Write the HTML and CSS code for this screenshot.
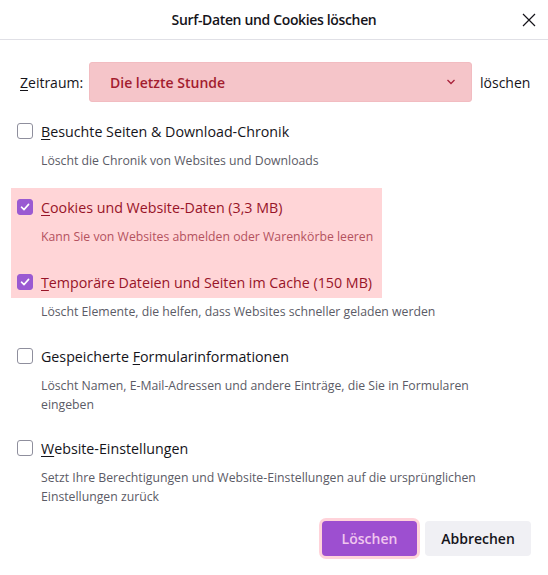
FILE: index.html
```html
<!DOCTYPE html>
<html lang="de">
<head>
<meta charset="utf-8">
<title>Surf-Daten und Cookies löschen</title>
<link rel="stylesheet" href="styles.css">
</head>
<body>
<div class="dialog">
  <header class="dialog-header">
    <h1 class="dialog-title">Surf-Daten und Cookies löschen</h1>
    <button class="close-btn" aria-label="Schließen">
      <svg width="14" height="14" viewBox="0 0 14 14"><path d="M1 1 L13 13 M13 1 L1 13" stroke="#15141a" stroke-width="1.2" fill="none"/></svg>
    </button>
  </header>

  <div class="dialog-body">
    <div class="range-row">
      <label class="range-label"><u>Z</u>eitraum:</label>
      <div class="select">
        <span class="select-value">Die letzte Stunde</span>
        <svg class="select-chevron" width="10" height="6" viewBox="0 0 10 6"><path d="M1.5 1 L5 4.5 L8.5 1" stroke="#a8213a" stroke-width="1.3" fill="none"/></svg>
      </div>
      <span class="range-suffix">löschen</span>
    </div>

    <div class="options">
      <div class="highlight"></div>

      <div class="option">
        <label class="option-row">
          <span class="checkbox"></span>
          <span class="option-label"><u>B</u>esuchte Seiten &amp; Download-Chronik</span>
        </label>
        <p class="option-desc">Löscht die Chronik von Websites und Downloads</p>
      </div>

      <div class="option option-marked">
        <label class="option-row">
          <span class="checkbox checked"><svg width="12" height="12" viewBox="0 0 12 12"><path d="M2.5 6.2 L5 8.6 L9.6 3.4" stroke="#fff" stroke-width="1.6" fill="none" stroke-linecap="round" stroke-linejoin="round"/></svg></span>
          <span class="option-label"><u>C</u>ookies und Website-Daten (3,3 MB)</span>
        </label>
        <p class="option-desc">Kann Sie von Websites abmelden oder Warenkörbe leeren</p>
      </div>

      <div class="option">
        <label class="option-row option-marked">
          <span class="checkbox checked"><svg width="12" height="12" viewBox="0 0 12 12"><path d="M2.5 6.2 L5 8.6 L9.6 3.4" stroke="#fff" stroke-width="1.6" fill="none" stroke-linecap="round" stroke-linejoin="round"/></svg></span>
          <span class="option-label"><u>T</u>emporäre Dateien und Seiten im Cache (150 MB)</span>
        </label>
        <p class="option-desc">Löscht Elemente, die helfen, dass Websites schneller geladen werden</p>
      </div>

      <div class="option">
        <label class="option-row">
          <span class="checkbox"></span>
          <span class="option-label">Gespeicherte <u>F</u>ormularinformationen</span>
        </label>
        <p class="option-desc">Löscht Namen, E-Mail-Adressen und andere Einträge, die Sie in Formularen eingeben</p>
      </div>

      <div class="option">
        <label class="option-row">
          <span class="checkbox"></span>
          <span class="option-label"><u>W</u>ebsite-Einstellungen</span>
        </label>
        <p class="option-desc">Setzt Ihre Berechtigungen und Website-Einstellungen auf die ursprünglichen Einstellungen zurück</p>
      </div>
    </div>
  </div>

  <footer class="dialog-footer">
    <button class="btn btn-primary">Löschen</button>
    <button class="btn btn-secondary">Abbrechen</button>
  </footer>
</div>
</body>
</html>
```

FILE: styles.css
```css
html, body {
  margin: 0;
  padding: 0;
  background: #ffffff;
}

body {
  font-family: "Open Sans", "Noto Sans", sans-serif;
  color: #15141a;
  width: 548px;
  height: 575px;
  overflow: hidden;
}

u {
  text-decoration: underline;
  text-underline-offset: 2px;
  text-decoration-thickness: 1px;
}

/* header with centered title and close cross */
.dialog-header {
  position: relative;
  height: 39px;
  border-bottom: 1px solid #e0e0e6;
  display: flex;
  align-items: center;
  justify-content: center;
}

.dialog-title {
  margin: 0;
  font-size: 14px;
  font-weight: 600;
  letter-spacing: -0.35px;
}

.close-btn {
  position: absolute;
  right: 11px;
  top: 12px;
  width: 16px;
  height: 16px;
  padding: 0;
  border: 0;
  background: none;
  display: flex;
  align-items: center;
  justify-content: center;
}

.dialog-body {
  padding: 22px 17px 0 20px;
}

/* time range selector */
.range-row {
  display: flex;
  align-items: center;
  gap: 7px;
  font-size: 14px;
}

.range-label {
  width: 62px;
}

.select {
  width: 383px;
  height: 40px;
  box-sizing: border-box;
  background: #f5c5c9;
  border: 1px solid #f2bcc1;
  border-radius: 3px;
  display: flex;
  align-items: center;
  justify-content: space-between;
  padding: 0 15px 0 20px;
}

.select-value {
  color: #a31d2f;
  font-weight: 600;
  font-size: 14px;
}

.range-suffix {
  margin-left: 1px;
}

/* checkbox list */
.options {
  position: relative;
  margin-top: 19px;
  margin-left: -3px;
  display: flex;
  flex-direction: column;
  gap: 25px;
}

.highlight {
  position: absolute;
  left: -6px;
  top: 67px;
  width: 371px;
  height: 110px;
  background: #ffd5d7;
}

.option {
  position: relative;
}

.option:nth-of-type(2) {
  margin-bottom: 2px;
}

.option:nth-of-type(3) {
  margin-bottom: 1px;
}

.option:nth-of-type(5) {
  margin-bottom: -1px;
}

.option-row {
  display: flex;
  align-items: center;
  gap: 8px;
  height: 20px;
  font-size: 14.25px;
}

.checkbox {
  width: 16px;
  height: 16px;
  box-sizing: border-box;
  border: 1px solid #8f8f9d;
  border-radius: 3px;
  background: #fff;
  display: flex;
  align-items: center;
  justify-content: center;
}

.checkbox.checked {
  background: #9a5ad2;
  border-color: #9a5ad2;
}

.option-desc {
  margin: 10px 0 0 24px;
  font-size: 12.25px;
  line-height: 19px;
  color: #5b5b66;
  max-width: 450px;
}

.option-marked .option-label {
  color: #981428;
}

.option-marked .option-desc {
  color: #b4525e;
}

/* footer buttons */
.dialog-footer {
  position: absolute;
  top: 521px;
  right: 17px;
  display: flex;
  gap: 8px;
}

.btn {
  height: 35px;
  border: 0;
  border-radius: 4px;
  font-family: inherit;
  font-size: 14px;
  font-weight: 600;
  padding: 0;
}

.btn-primary {
  width: 95px;
  background: #9d4fd0;
  color: #f0c6ee;
  box-shadow: 0 0 0 3px #ffd3da;
}

.btn-secondary {
  width: 106px;
  background: #f0f0f4;
  color: #15141a;
}
```
